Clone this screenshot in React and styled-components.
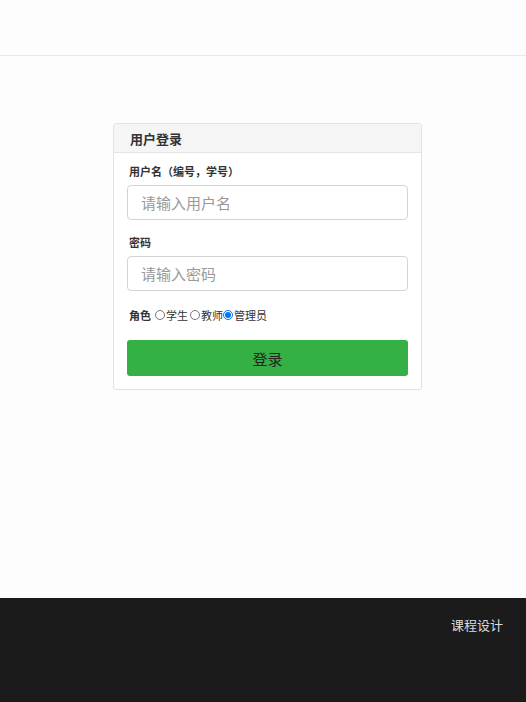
import React from 'react';
import styled, { createGlobalStyle } from 'styled-components';

const GlobalStyle = createGlobalStyle`
  html, body {
    margin: 0;
    padding: 0;
    background: #fdfdfd;
    font-family: "Microsoft YaHei", "Noto Sans CJK SC", "Liberation Sans", sans-serif;
    color: #333;
  }
  * { box-sizing: border-box; }
`;

const Page = styled.div`
  display: flex;
  flex-direction: column;
  min-height: 702px;
`;

const Header = styled.header`
  height: 56px;
  background: #fdfdfd;
  border-bottom: 1px solid #e8e8e8;
`;

const Main = styled.main`
  flex: 1;
  display: flex;
  justify-content: center;
  align-items: flex-start;
  padding-top: 67px;
  padding-left: 9px;
`;

const Card = styled.div`
  width: 309px;
  background: #fff;
  border: 1px solid #e2e2e2;
  border-radius: 3px;
`;

const CardHeader = styled.div`
  height: 29px;
  background: #f5f5f5;
  border-bottom: 1px solid #e4e4e4;
  padding: 0 16px;
  display: flex;
  align-items: center;
  font-size: 13px;
  font-weight: 700;
  color: #333;
`;

const CardBody = styled.form`
  padding: 10px 13px 13px;
  display: flex;
  flex-direction: column;
`;

const Label = styled.label`
  font-size: 11px;
  line-height: 16px;
  font-weight: 700;
  color: #333;
  margin-bottom: 6px;
  padding-left: 2px;
`;

const Input = styled.input`
  width: 100%;
  height: 35px;
  border: 1px solid #d4d4d4;
  border-radius: 4px;
  padding: 0 13px;
  font-size: 15px;
  font-family: inherit;
  color: #333;
  margin-bottom: 14px;
  outline: none;
  &::placeholder { color: #999; }
`;

const RoleRow = styled.div`
  display: flex;
  align-items: center;
  font-size: 11px;
  line-height: 16px;
  color: #333;
  margin-top: 2px;
  padding-left: 2px;
  margin-bottom: 17px;
`;

const RoleLabel = styled.span`
  font-weight: 700;
  margin-right: 2px;
`;

const Radio = styled.input`
  width: 10px;
  height: 10px;
  margin: 0 1px 0 ${p => (p.$tight ? 0 : 2)}px;
`;

const Option = styled.label`
  display: flex;
  align-items: center;
`;

const Button = styled.button`
  height: 36px;
  width: 100%;
  border: none;
  border-radius: 3px;
  background: #34b044;
  color: #222;
  font-size: 15px;
  font-family: inherit;
`;

const Footer = styled.footer`
  height: 104px;
  background: #1b1b1b;
  display: flex;
  justify-content: flex-end;
  padding: 17px 23px 0 0;
  color: #dcdcdc;
  font-size: 13px;
`;

export default function App() {
  return (
    <>
      <GlobalStyle />
      <Page>
        <Header />
        <Main>
          <Card>
            <CardHeader>用户登录</CardHeader>
            <CardBody onSubmit={e => e.preventDefault()}>
              <Label>用户名（编号，学号）</Label>
              <Input placeholder="请输入用户名" />
              <Label>密码</Label>
              <Input type="password" placeholder="请输入密码" />
              <RoleRow>
                <RoleLabel>角色</RoleLabel>
                <Option><Radio type="radio" name="role" />学生</Option>
                <Option><Radio type="radio" name="role" />教师</Option>
                <Option><Radio type="radio" name="role" $tight defaultChecked />管理员</Option>
              </RoleRow>
              <Button type="submit">登录</Button>
            </CardBody>
          </Card>
        </Main>
        <Footer>课程设计</Footer>
      </Page>
    </>
  );
}
